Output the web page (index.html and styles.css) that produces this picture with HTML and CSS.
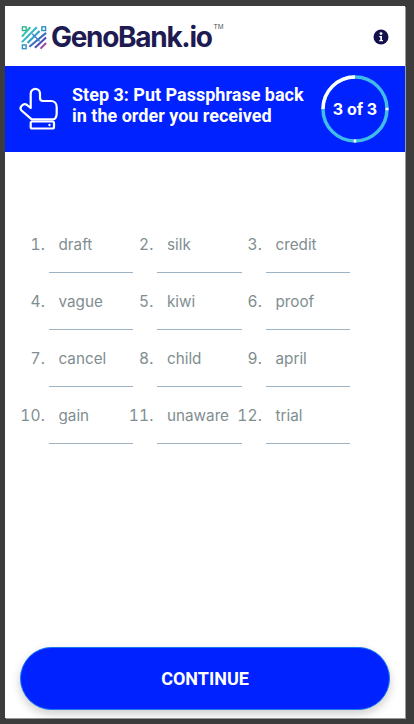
FILE: index.html
```html
<!DOCTYPE html>
<html lang="en">
<head>
    <meta charset="UTF-8">
    <meta name="viewport" content="width=device-width, initial-scale=1.0">
    <title>GenoBank.io - Step 3</title>
    <link rel="stylesheet" href="styles.css">
</head>
<body>
    <div class="app">
        <header class="topbar">
            <div class="logo">
                <svg class="logo-mark" width="26" height="25" viewBox="0 0 28 26" aria-hidden="true">
                    <rect x="1.5" y="1.5" width="4" height="4" fill="none" stroke="#35b58f" stroke-width="1.5"/>
                    <rect x="22.5" y="1.5" width="4" height="4" fill="none" stroke="#2f8fc0" stroke-width="1.5"/>
                    <rect x="1.5" y="21" width="4" height="4" fill="none" stroke="#2f8fc0" stroke-width="1.5"/>
                    <g fill="none" stroke-width="2.2">
                        <path d="M1 12L10 2" stroke="#35bfa5"/>
                        <path d="M1 18L17 2" stroke="#2fb4c8"/>
                        <path d="M7 19L20 6" stroke="#2f9fd0"/>
                        <path d="M9 23L27 8" stroke="#3a6fc0"/>
                        <path d="M15 24L27 13" stroke="#4a4fb0"/>
                        <path d="M21 25L27 19" stroke="#a0479f"/>
                        <path d="M12 9L20 17" stroke="#3f7fc0" stroke-width="1.4"/>
                    </g>
                </svg>
                <span class="logo-text">GenoBank.io</span>
                <span class="logo-tm">TM</span>
            </div>
            <svg class="info-icon" width="16" height="16" viewBox="0 0 16 16" aria-hidden="true">
                <circle cx="8" cy="8" r="7.5" fill="#14104d"/>
                <circle cx="8" cy="4.6" r="1.4" fill="#fff"/>
                <path d="M6.3 7h2.7v4h1v1.3H6.3V11h1V8.3h-1z" fill="#fff"/>
            </svg>
        </header>

        <section class="banner">
            <svg class="hand-icon" width="40" height="46" viewBox="0 0 40 46" aria-hidden="true">
                <path d="M12.7 22V7.5a4.6 4.6 0 0 1 9.3 0V12c0 2 1 3 3 3h8c3.5 0 5.7 2.5 5.7 6v6c0 3.5-1 6-3.5 6.3H13.7L3.5 24.5c-1.5-1.5-1-3.5 .5-5s3.5-1.5 5-.5z" fill="none" stroke="#fff" stroke-width="2.2" stroke-linejoin="round"/>
                <rect x="12.7" y="35.5" width="23.3" height="7" rx="1.5" fill="none" stroke="#fff" stroke-width="2.2"/>
                <circle cx="31.5" cy="39" r="1.2" fill="#fff"/>
            </svg>
            <h1 class="banner-title">Step 3: Put Passphrase back<br>in the order you received</h1>
            <div class="progress">
                <svg width="68" height="68" viewBox="0 0 68 68" aria-hidden="true">
                    <circle cx="34" cy="34" r="32" fill="none" stroke="#3fbce8" stroke-width="3.5"/>
                    <path d="M2 34A32 32 0 0 1 34 2" fill="none" stroke="#fff" stroke-width="3.5"/>
                    <path d="M64.5 34H67.5M34 64.5V67.5" stroke="#fff" stroke-width="2.5"/>
                </svg>
                <span class="progress-label">3 of 3</span>
            </div>
        </section>

        <main class="words">
            <div class="word"><span class="word-num"><span>1.</span></span><span class="word-field">draft</span></div>
            <div class="word"><span class="word-num"><span>2.</span></span><span class="word-field">silk</span></div>
            <div class="word"><span class="word-num"><span>3.</span></span><span class="word-field">credit</span></div>
            <div class="word"><span class="word-num"><span>4.</span></span><span class="word-field">vague</span></div>
            <div class="word"><span class="word-num"><span>5.</span></span><span class="word-field">kiwi</span></div>
            <div class="word"><span class="word-num"><span>6.</span></span><span class="word-field">proof</span></div>
            <div class="word"><span class="word-num"><span>7.</span></span><span class="word-field">cancel</span></div>
            <div class="word"><span class="word-num"><span>8.</span></span><span class="word-field">child</span></div>
            <div class="word"><span class="word-num"><span>9.</span></span><span class="word-field">april</span></div>
            <div class="word"><span class="word-num"><span>10.</span></span><span class="word-field">gain</span></div>
            <div class="word"><span class="word-num"><span>11.</span></span><span class="word-field">unaware</span></div>
            <div class="word"><span class="word-num"><span>12.</span></span><span class="word-field">trial</span></div>
        </main>

        <button class="continue-btn" type="button">CONTINUE</button>
    </div>
</body>
</html>
```

FILE: styles.css
```css
* {
    box-sizing: border-box;
}

html,
body {
    height: 100%;
}

body {
    margin: 0;
    padding: 6px 9px 6px 5px;
    background-color: #3c3c3c;
    overflow: hidden;
}

.app {
    height: 100%;
    background-color: #fff;
    display: flex;
    flex-direction: column;
    font-family: Roboto, sans-serif;
    box-shadow: 1px 1px 0 #9a9a9a;
}

/* Logo row */
.topbar {
    height: 60px;
    flex: none;
    display: flex;
    align-items: center;
    justify-content: space-between;
    padding: 2px 16px 0 16px;
}

.logo {
    display: flex;
    align-items: center;
}

.logo-mark {
    flex: none;
    margin-right: 4px;
}

.logo-text {
    font-family: Inter, sans-serif;
    font-size: 28px;
    font-weight: 700;
    letter-spacing: -1.3px;
    color: #1e1a52;
}

.logo-tm {
    font-family: "Liberation Sans", sans-serif;
    font-size: 7px;
    color: #555;
    margin: -22px 0 0 2px;
}

/* Blue step banner */
.banner {
    height: 86px;
    flex: none;
    display: flex;
    align-items: center;
    background-color: #0022ff;
    padding: 0 16px 0 13px;
    color: #fff;
}

.hand-icon {
    flex: none;
}

.banner-title {
    margin: 0 0 8px 14px;
    flex: 1;
    font-size: 18px;
    font-weight: 700;
    line-height: 21px;
}

.progress {
    position: relative;
    width: 68px;
    height: 68px;
    flex: none;
}

.progress svg {
    display: block;
}

.progress-label {
    position: absolute;
    inset: 0;
    display: flex;
    align-items: center;
    justify-content: center;
    font-family: Inter, sans-serif;
    font-size: 16px;
    font-weight: 700;
}

/* Passphrase words */
.words {
    flex: 1;
    display: grid;
    grid-template-columns: repeat(3, 108.5px);
    grid-auto-rows: 57px;
    align-content: start;
    padding: 69px 0 0 20px;
    font-family: Inter, sans-serif;
    font-size: 15.25px;
    color: #7f8e90;
}

.word {
    display: flex;
}

.word-num {
    width: 20px;
    margin-right: 3.5px;
    flex: none;
    display: flex;
    justify-content: flex-end;
    white-space: nowrap;
    padding-top: 14px;
    font-size: 15.5px;
    font-variant-numeric: tabular-nums;
    letter-spacing: 0.2px;
}

.word-field {
    width: 84.5px;
    height: 52px;
    padding: 14px 0 0 10px;
    border-bottom: 1px solid #9db2c2;
}

.continue-btn {
    flex: none;
    margin: 0 15px 8px;
    height: 63px;
    border: 1px solid #1a78f0;
    border-radius: 32px;
    background-color: #0022ff;
    color: #fff;
    font-family: Roboto, sans-serif;
    font-size: 18px;
    font-weight: 700;
    box-shadow: 0 4px 10px rgba(0, 0, 0, 0.2);
}
```
